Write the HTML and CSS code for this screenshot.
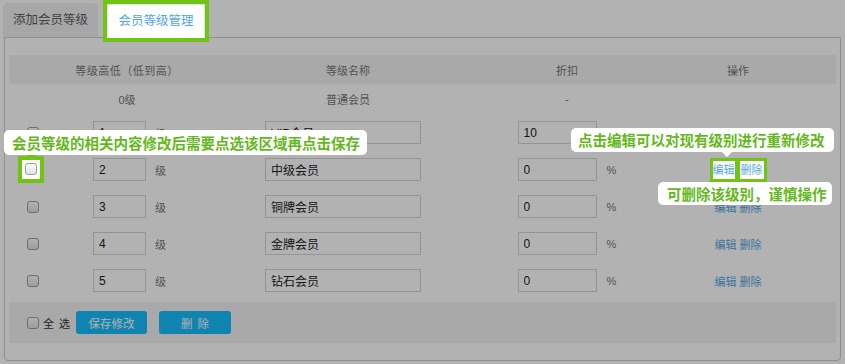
FILE: index.html
```html
<!DOCTYPE html>
<html lang="zh-CN">
<head>
<meta charset="utf-8">
<title>会员等级管理</title>
<link rel="stylesheet" href="styles.css">
</head>
<body>
<div class="page">
  <div class="tabs">
    <div class="tab">添加会员等级</div>
    <div class="tab active">会员等级管理</div>
  </div>
  <div class="panel">
    <div class="row head">
      <div class="c">等级高低（低到高）</div>
      <div class="c">等级名称</div>
      <div class="c">折扣</div>
      <div class="c">操作</div>
    </div>
    <div class="row base">
      <div class="c">0级</div>
      <div class="c">普通会员</div>
      <div class="c">-</div>
      <div class="c"></div>
    </div>
    <div class="row">
      <div class="c lv"><span class="cbslot"><input type="checkbox" class="cb"></span><input class="ipt ipt-lv" value="1"><span class="unit">级</span></div>
      <div class="c nm"><input class="ipt ipt-nm" value="VIP会员"></div>
      <div class="c dc"><input class="ipt ipt-dc" value="10"><span class="unit">%</span></div>
      <div class="c ops"><a class="lnk">编辑</a><a class="lnk">删除</a></div>
    </div>
    <div class="row">
      <div class="c lv"><span class="cbslot"><span class="hlbox"><input type="checkbox" class="cb"></span></span><input class="ipt ipt-lv" value="2"><span class="unit">级</span></div>
      <div class="c nm"><input class="ipt ipt-nm" value="中级会员"></div>
      <div class="c dc"><input class="ipt ipt-dc" value="0"><span class="unit">%</span></div>
      <div class="c ops"><a class="lnk hl hl-edit">编辑</a><a class="lnk hl hl-del">删除</a></div>
    </div>
    <div class="row">
      <div class="c lv"><span class="cbslot"><input type="checkbox" class="cb"></span><input class="ipt ipt-lv" value="3"><span class="unit">级</span></div>
      <div class="c nm"><input class="ipt ipt-nm" value="铜牌会员"></div>
      <div class="c dc"><input class="ipt ipt-dc" value="0"><span class="unit">%</span></div>
      <div class="c ops"><a class="lnk">编辑</a><a class="lnk">删除</a></div>
    </div>
    <div class="row">
      <div class="c lv"><span class="cbslot"><input type="checkbox" class="cb"></span><input class="ipt ipt-lv" value="4"><span class="unit">级</span></div>
      <div class="c nm"><input class="ipt ipt-nm" value="金牌会员"></div>
      <div class="c dc"><input class="ipt ipt-dc" value="0"><span class="unit">%</span></div>
      <div class="c ops"><a class="lnk">编辑</a><a class="lnk">删除</a></div>
    </div>
    <div class="row">
      <div class="c lv"><span class="cbslot"><input type="checkbox" class="cb"></span><input class="ipt ipt-lv" value="5"><span class="unit">级</span></div>
      <div class="c nm"><input class="ipt ipt-nm" value="钻石会员"></div>
      <div class="c dc"><input class="ipt ipt-dc" value="0"><span class="unit">%</span></div>
      <div class="c ops"><a class="lnk">编辑</a><a class="lnk">删除</a></div>
    </div>
    <div class="foot">
      <input type="checkbox" class="cb"><span class="all">全 选</span>
      <button class="btn">保存修改</button>
      <button class="btn btn-del">删 除</button>
    </div>
  </div>
  <div class="overlay"></div>
  <div class="tip tip1">会员等级的相关内容修改后需要点选该区域再点击保存</div>
  <div class="tip tip2">点击编辑可以对现有级别进行重新修改</div>
  <div class="tip tip3">可删除该级别，谨慎操作</div>
</div>
</body>
</html>
```

FILE: styles.css
```css
html, body {
  margin: 0;
  background: #fff;
}
body {
  font-family: "Liberation Sans", "Noto Sans CJK SC", sans-serif;
  font-size: 11px;
  color: #777;
}
.page {
  position: relative;
  width: 845px;
  height: 364px;
  overflow: hidden;
}
.overlay {
  position: absolute;
  inset: 0;
  background: rgba(0, 0, 0, 0.3);
  z-index: 2;
}

/* tabs */
.tabs {
  display: flex;
  align-items: flex-start;
  height: 37px;
  padding-left: 3px;
}
.tab {
  margin-top: 3px;
  width: 95px;
  height: 34px;
  line-height: 34px;
  text-align: center;
  font-size: 12.5px;
  color: #5e5e5e;
  background: #efefef;
  border-radius: 5px 5px 0 0;
}
.tab.active {
  position: relative;
  z-index: 3;
  margin-top: 4px;
  margin-left: 9px;
  width: 96px;
  height: 33px;
  line-height: 33px;
  background: #fff;
  border: 1px solid #e2e2e2;
  border-bottom: none;
  border-radius: 0;
  color: #4ea6e6;
  outline: 4px solid #72c414;
}

/* panel */
.panel {
  margin: 0 4px;
  border: 1px solid #cdcdcd;
  border-radius: 0 0 4px 4px;
  padding: 17px 4px;
}
.row {
  display: grid;
  grid-template-columns: 236px 206px 232px 110px 1fr;
  align-items: center;
  height: 37px;
}
.row.head {
  height: 29px;
  background: #f2f2f2;
}
.row.base {
  height: 30px;
}
.c {
  display: flex;
  align-items: center;
}
.head .c, .base .c {
  justify-content: center;
}
.head .c:first-child {
  letter-spacing: 0.5px;
}
.lv {
  padding-left: 18px;
}
.cbslot {
  width: 66px;
  display: flex;
  align-items: center;
}
.cb {
  appearance: none;
  -webkit-appearance: none;
  box-sizing: border-box;
  margin: 0;
  width: 12px;
  height: 12px;
  border: 1px solid #9e9e9e;
  border-radius: 3px;
  background: linear-gradient(#fdfdfd, #e2e2e2);
}
.ipt {
  box-sizing: border-box;
  height: 23px;
  margin: 0;
  padding: 0 5px;
  border: 1px solid #d4d4d4;
  background: #fff;
  font: 12px "Liberation Sans", "Noto Sans CJK SC", sans-serif;
  color: #222;
  outline: none;
}
.ipt-lv { width: 53px; }
.unit { margin-left: 9px; }
.nm { padding-left: 20px; }
.ipt-nm { width: 156px; }
.dc { justify-content: center; }
.ipt-dc { width: 79px; }
.dc .unit { margin-left: 10px; }
.ops { justify-content: center; }
.lnk {
  color: #55a5e2;
  text-decoration: none;
}
.lnk + .lnk { margin-left: 3px; }

/* highlighted targets */
.hlbox {
  position: relative;
  z-index: 3;
  display: inline-flex;
  margin-left: -9px;
  padding: 3px 3px 4px;
  border: 4px solid #72c414;
  background: #fff;
}
.hlbox::before {
  content: "";
  position: absolute;
  top: -9px;
  left: calc(50% - 5px);
  border: 5px solid transparent;
  border-top: 0;
  border-bottom-color: #72c414;
}
.lnk.hl {
  position: relative;
  z-index: 3;
  display: inline-block;
  line-height: 18px;
  border: 3px solid #72c414;
  background: #fff;
}
.lnk.hl + .lnk.hl { margin-left: -1px; padding: 0 1px; }
.hl-del::after {
  content: "";
  position: absolute;
  top: calc(100% + 3px);
  left: 2px;
  border: 5px solid transparent;
  border-bottom: 0;
  border-top-color: #72c414;
}

/* footer */
.foot {
  margin-top: 3px;
  height: 41px;
  background: #f2f2f2;
  display: flex;
  align-items: center;
  padding-left: 18px;
}
.all {
  display: inline-block;
  width: 27px;
  margin-left: 4px;
  color: #333;
  white-space: nowrap;
  text-align: justify;
  text-align-last: justify;
}
.btn {
  height: 23px;
  width: 71px;
  margin-left: 6px;
  padding: 0;
  border: none;
  border-radius: 3px;
  background: #18bdfc;
  color: #fff;
  font: 11.5px "Liberation Sans", "Noto Sans CJK SC", sans-serif;
}
.btn-del {
  margin-left: 12px;
  width: 72px;
  word-spacing: 2px;
}

/* callouts */
.tip {
  position: absolute;
  z-index: 4;
  box-sizing: border-box;
  background: #fff;
  border-radius: 5px;
  color: #64b81c;
  font-family: "Noto Sans CJK SC", sans-serif;
  font-weight: 700;
  font-size: 14.5px;
  white-space: nowrap;
}
.tip1 {
  left: 4px;
  top: 130px;
  width: 363px;
  height: 25px;
  line-height: 25px;
  padding-left: 8px;
}
.tip2 {
  left: 571px;
  top: 128px;
  width: 263px;
  height: 24px;
  line-height: 24px;
  padding-left: 7px;
}
.tip2::after {
  content: "";
  position: absolute;
  top: 100%;
  left: 151px;
  border: 5px solid transparent;
  border-bottom: 0;
  border-top-color: #fff;
}
.tip3 {
  left: 658px;
  top: 182px;
  width: 174px;
  height: 23px;
  line-height: 23px;
  padding-left: 9px;
}
```
